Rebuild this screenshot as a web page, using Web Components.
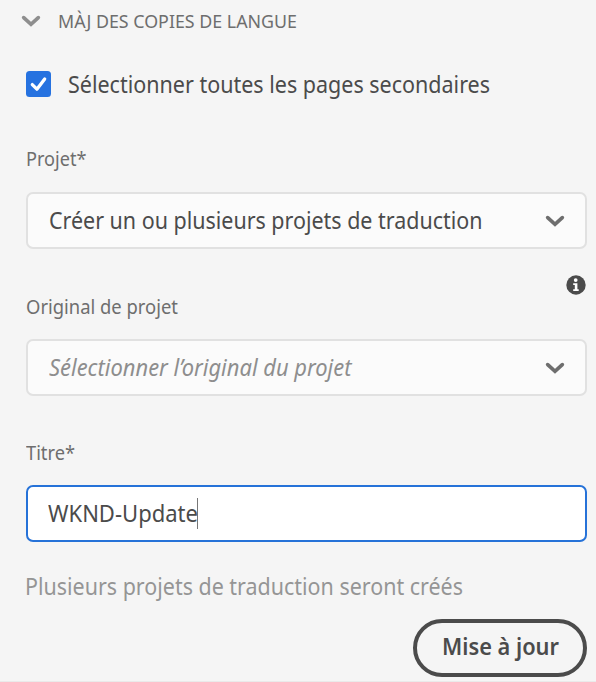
<!DOCTYPE html>
<html lang="fr">
<head>
<meta charset="utf-8">
<title>Màj des copies de langue</title>
<style>
html, body { margin: 0; height: 100%; overflow: hidden; background: #f5f5f5; }
body { font-family: "Noto Sans", "Open Sans", sans-serif; color: #4b4b4b; }
</style>
</head>
<body>
<copy-panel></copy-panel>
<script>
function define(name, html, setup) {
  const template = document.createElement('template');
  template.innerHTML = html;
  customElements.define(name, class extends HTMLElement {
    connectedCallback() {
      if (this.shadowRoot) return;
      this.attachShadow({ mode: 'open' }).append(template.content.cloneNode(true));
      if (setup) setup(this, this.shadowRoot);
    }
  });
}

// Text condensed horizontally to the advance width given in "width".
define('fit-text', `
<style>
:host { display: block; white-space: nowrap; flex: none; }
span { display: inline-block; transform-origin: 0 50%; vertical-align: top; }
</style><span><slot></slot></span>`, (host, root) => {
  const span = root.querySelector('span');
  const width = parseFloat(host.getAttribute('width'));
  span.style.transform = 'scaleX(' + width / span.getBoundingClientRect().width + ')';
  host.style.width = width + 'px';
});

define('chevron-icon', `
<style>:host { display: block; width: 20px; height: 14px; flex: none; } svg { display: block; }</style>
<svg width="20" height="14" viewBox="0 0 20 14"><path d="M2.7 3.6 10 10.3 17.3 3.6" fill="none" stroke="currentColor" stroke-width="3.7" stroke-linecap="round" stroke-linejoin="miter"/></svg>`);

define('info-icon', `
<style>:host { display: block; width: 20px; height: 20px; color: #4b4b4b; } svg { display: block; }</style>
<svg width="20" height="20" viewBox="0 0 20 20"><circle cx="10" cy="10" r="9.7" fill="currentColor"/><circle cx="9.7" cy="5.1" r="1.9" fill="#fff"/><path d="M7.2 8.2h4.2v6h1.3v1.8H7.2v-1.8h1.6V10H7.2z" fill="#fff"/></svg>`);

define('section-header', `
<style>
:host { display: flex; align-items: center; height: 42px; padding-left: 21px; font-size: 18.8px; line-height: 42px; color: #6e6e6e; }
chevron-icon { color: #8e8e8e; margin-right: 17px; }
</style><chevron-icon></chevron-icon><slot></slot>`);

define('check-box', `
<style>
:host { display: flex; align-items: center; height: 40px; margin-top: 22px; padding-left: 26px; font-size: 23.5px; line-height: 40px; }
.box { width: 25px; height: 26px; border-radius: 3.5px; background: #2672e0; margin-right: 17px; }
svg { display: block; }
</style>
<div class="box"><svg width="25" height="26" viewBox="0 0 25 26"><path d="M6.3 13.6 10.9 18.2 18.7 8" fill="none" stroke="#fff" stroke-width="3.3" stroke-linecap="round" stroke-linejoin="round"/></svg></div>
<slot></slot>`);

define('field-label', `
<style>:host { display: block; padding-left: 25.5px; font-size: 19px; line-height: 24px; height: 24px; color: #6e6e6e; }</style><slot></slot>`);

define('select-box', `
<style>
:host { display: flex; align-items: center; justify-content: space-between; box-sizing: border-box; height: 57px; margin: 0 9px 0 26px; padding: 0 20px 0 21px; border: 2px solid #e1e1e1; border-radius: 7px; background: #fbfbfb; font-size: 23.5px; line-height: 53px; }
:host([placeholder]) { font-style: italic; color: #8e8e8e; }
chevron-icon { color: #6e6e6e; }
</style><slot></slot><chevron-icon></chevron-icon>`);

define('text-box', `
<style>
:host { display: flex; align-items: center; box-sizing: border-box; height: 57px; margin: 0 9px 0 26px; padding-left: 19.5px; border: 2px solid #2672d8; border-radius: 7px; background: #fff; font-size: 23.5px; line-height: 53px; }
.caret { width: 1px; height: 31px; background: #777; margin-left: -1px; }
</style><slot></slot><div class="caret"></div>`);

define('pill-button', `
<style>
:host { display: flex; align-items: center; justify-content: center; box-sizing: border-box; width: 174px; height: 58px; border: 4px solid #4b4b4b; border-radius: 29px; font-size: 23.3px; font-weight: 600; line-height: 46px; }
fit-text, ::slotted(fit-text) { padding-bottom: 4px; }
</style><slot></slot>`);

define('copy-panel', `
<style>
:host { display: flex; flex-direction: column; box-sizing: border-box; height: 682px; border-bottom: 1px solid #eaeaea; background: #f5f5f5; }
.first { margin-top: 43px; }
.info { display: flex; justify-content: flex-end; padding-right: 10px; margin-top: 26px; }
.last { margin-top: 45px; }
select-box, text-box { margin-top: 20px; flex: none; }
.first + select-box { margin-top: 21px; }
.message { padding-left: 25px; margin-top: 24px; height: 40px; font-size: 23.5px; line-height: 40px; color: #959595; }
.actions { display: flex; justify-content: flex-end; margin-top: 13px; padding-right: 9px; }
</style>
<section-header><fit-text width="239">MÀJ DES COPIES DE LANGUE</fit-text></section-header>
<check-box><fit-text width="422">Sélectionner toutes les pages secondaires</fit-text></check-box>
<field-label class="first"><fit-text width="60.5">Projet*</fit-text></field-label>
<select-box><fit-text width="433.5">Créer un ou plusieurs projets de traduction</fit-text></select-box>
<div class="info"><info-icon></info-icon></div>
<field-label><fit-text width="152">Original de projet</fit-text></field-label>
<select-box placeholder><fit-text width="302.5">Sélectionner l’original du projet</fit-text></select-box>
<field-label class="last"><fit-text width="49">Titre*</fit-text></field-label>
<text-box><fit-text width="150">WKND-Update</fit-text></text-box>
<div class="message"><fit-text width="438">Plusieurs projets de traduction seront créés</fit-text></div>
<div class="actions"><pill-button><fit-text width="117">Mise à jour</fit-text></pill-button></div>`);
</script>
</body>
</html>
